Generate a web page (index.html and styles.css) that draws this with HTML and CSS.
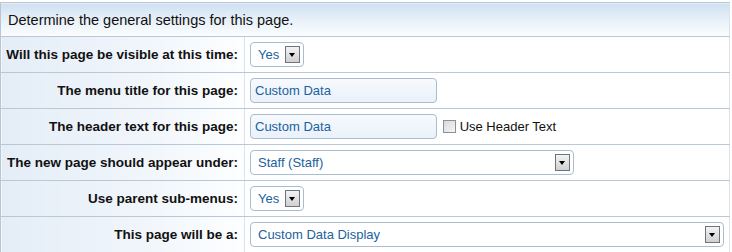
FILE: index.html
```html
<!DOCTYPE html>
<html>
<head>
  <title>Page Settings</title>
  <link rel="stylesheet" href="styles.css">
</head>
<body>
  <table class="settings">
    <tbody>
      <tr>
        <td class="intro" colspan="2">Determine the general settings for this page.</td>
      </tr>
      <tr>
        <td class="label">Will this page be visible at this time:</td>
        <td class="field">
          <span class="select sel-small"><span class="sel-text">Yes</span><span class="arrow"></span></span>
        </td>
      </tr>
      <tr>
        <td class="label">The menu title for this page:</td>
        <td class="field">
          <input type="text" class="text-input" value="Custom Data">
        </td>
      </tr>
      <tr>
        <td class="label">The header text for this page:</td>
        <td class="field">
          <input type="text" class="text-input" value="Custom Data">
          <label class="check"><span class="box"></span>Use Header Text</label>
        </td>
      </tr>
      <tr>
        <td class="label">The new page should appear under:</td>
        <td class="field">
          <span class="select sel-medium"><span class="sel-text">Staff (Staff)</span><span class="arrow"></span></span>
        </td>
      </tr>
      <tr>
        <td class="label">Use parent sub-menus:</td>
        <td class="field">
          <span class="select sel-small"><span class="sel-text">Yes</span><span class="arrow"></span></span>
        </td>
      </tr>
      <tr>
        <td class="label">This page will be a:</td>
        <td class="field">
          <span class="select sel-wide"><span class="sel-text">Custom Data Display</span><span class="arrow"></span></span>
        </td>
      </tr>
    </tbody>
  </table>
</body>
</html>
```

FILE: styles.css
```css
body {
  margin: 0;
  padding: 0;
  background: #fff;
  font-family: "Liberation Sans", Arial, sans-serif;
}

.settings {
  width: 730px;
  margin-top: 2px;
  border-collapse: collapse;
  border-left: 1px solid #b9c6d2;
  border-right: 1px solid #dbe3ea;
}

.settings td {
  border-top: 1px solid #b9c8d6;
  border-bottom: 1px solid #b9c8d6;
  height: 36px;
  padding: 0;
  box-sizing: border-box;
}

.settings .intro {
  height: 34px;
  padding-left: 7px;
  font-size: 14.5px;
  color: #111;
  background: linear-gradient(to bottom, #cfe0f0 0%, #e6eff8 45%, #fbfdfe 100%);
}

.settings .label {
  width: 244px;
  padding-right: 6px;
  text-align: right;
  font-weight: bold;
  font-size: 13.5px;
  color: #111;
  border-right: 1px solid #dbe4ec;
  background: linear-gradient(to right, #e4edf7 0%, #eef4fa 50%, #fdfeff 100%);
}

.settings .field {
  padding-left: 5px;
  font-size: 13px;
}

.text-input {
  width: 187px;
  height: 25px;
  box-sizing: border-box;
  margin: 0;
  padding: 0 4px;
  border: 1px solid #a8bcd2;
  border-radius: 4px;
  font-family: "Liberation Sans", Arial, sans-serif;
  font-size: 13px;
  color: #22619f;
  background: linear-gradient(to bottom, #f7fafd, #e9f1fa);
  outline: none;
  vertical-align: middle;
}

.check {
  display: inline-flex;
  align-items: center;
  margin-left: 2px;
  color: #111;
  vertical-align: middle;
}

.box {
  width: 11px;
  height: 11px;
  margin-right: 4px;
  border: 1px solid #8c9198;
  background: linear-gradient(135deg, #d6d8dc, #f6f6f7);
}

.select {
  display: inline-flex;
  align-items: center;
  height: 25px;
  box-sizing: border-box;
  padding: 0 3px 0 7px;
  border: 1px solid #a8bcd2;
  border-radius: 4px;
  background: #fff;
  color: #22619f;
  font-size: 13px;
  vertical-align: middle;
}

.sel-text {
  flex: 1;
}

.sel-small {
  width: 54px;
}

.sel-medium {
  width: 324px;
}

.sel-wide {
  width: 474px;
}

.arrow {
  position: relative;
  width: 15px;
  height: 17px;
  box-sizing: border-box;
  border: 1px solid #6f7479;
  background: linear-gradient(to bottom, #f3f3f3, #cfd0d2);
}

.arrow::after {
  content: "";
  position: absolute;
  left: 3px;
  top: 6px;
  border-left: 3.5px solid transparent;
  border-right: 3.5px solid transparent;
  border-top: 4px solid #000;
}
```
